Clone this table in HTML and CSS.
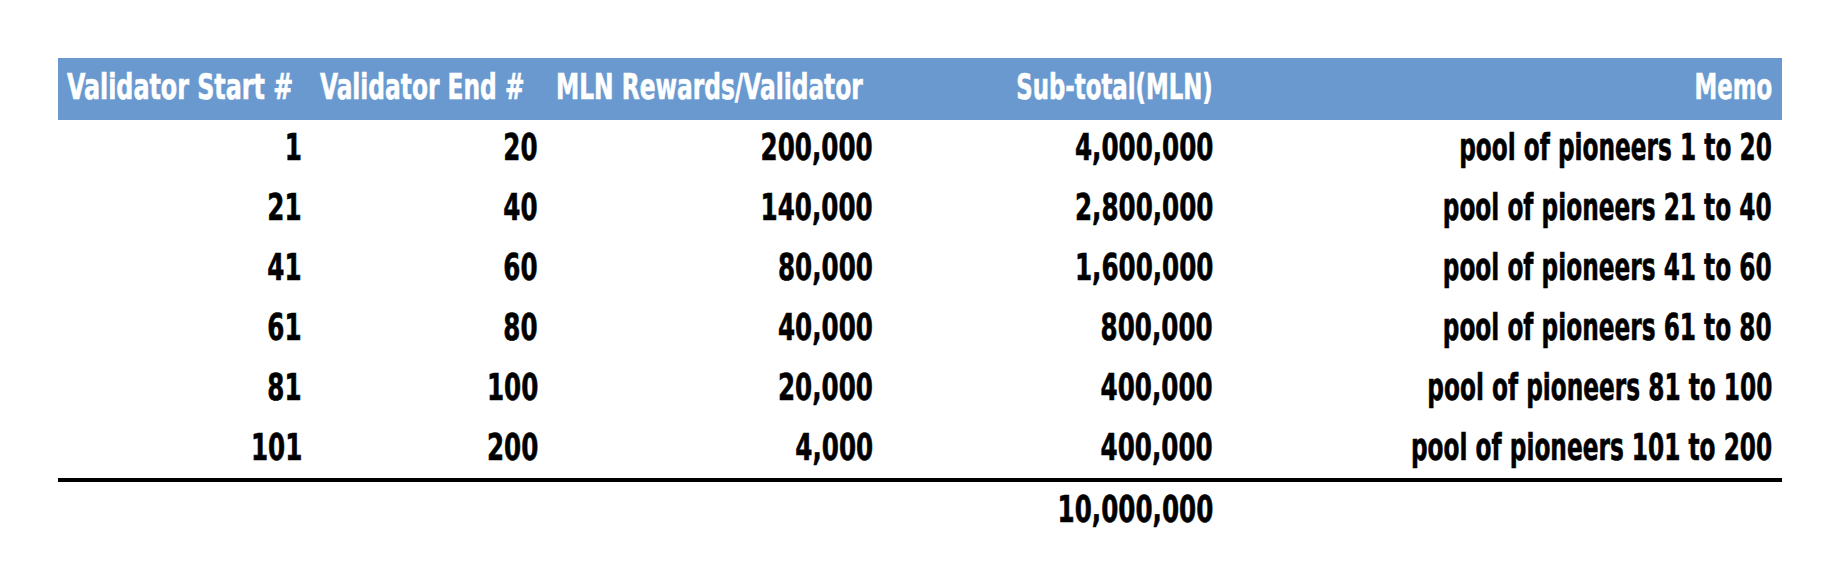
FILE: index.html
```html
<!DOCTYPE html>
<html>
<head>
<meta charset="utf-8">
<link rel="stylesheet" href="styles.css">
</head>
<body>
<table class="rewards">
  <colgroup>
    <col class="c1"><col class="c2"><col class="c3"><col class="c4"><col class="c5">
  </colgroup>
  <thead>
    <tr>
      <th class="left"><span class="t">Validator Start #</span></th>
      <th class="left"><span class="t">Validator End #</span></th>
      <th class="left"><span class="t">MLN Rewards/Validator</span></th>
      <th class="right"><span class="t">Sub-total(MLN)</span></th>
      <th class="right"><span class="t">Memo</span></th>
    </tr>
  </thead>
  <tbody>
    <tr><td><span class="t">1</span></td><td><span class="t">20</span></td><td><span class="t">200,000</span></td><td><span class="t">4,000,000</span></td><td><span class="t memo">pool of pioneers 1 to 20</span></td></tr>
    <tr><td><span class="t">21</span></td><td><span class="t">40</span></td><td><span class="t">140,000</span></td><td><span class="t">2,800,000</span></td><td><span class="t memo">pool of pioneers 21 to 40</span></td></tr>
    <tr><td><span class="t">41</span></td><td><span class="t">60</span></td><td><span class="t">80,000</span></td><td><span class="t">1,600,000</span></td><td><span class="t memo">pool of pioneers 41 to 60</span></td></tr>
    <tr><td><span class="t">61</span></td><td><span class="t">80</span></td><td><span class="t">40,000</span></td><td><span class="t">800,000</span></td><td><span class="t memo">pool of pioneers 61 to 80</span></td></tr>
    <tr><td><span class="t">81</span></td><td><span class="t">100</span></td><td><span class="t">20,000</span></td><td><span class="t">400,000</span></td><td><span class="t memo">pool of pioneers 81 to 100</span></td></tr>
    <tr class="last"><td><span class="t">101</span></td><td><span class="t">200</span></td><td><span class="t">4,000</span></td><td><span class="t">400,000</span></td><td><span class="t memo">pool of pioneers 101 to 200</span></td></tr>
  </tbody>
  <tfoot>
    <tr><td></td><td></td><td></td><td><span class="t">10,000,000</span></td><td></td></tr>
  </tfoot>
</table>
</body>
</html>
```
FILE: styles.css
```css
html, body {
  margin: 0;
  padding: 0;
  background: #ffffff;
}

.rewards {
  margin: 58px 0 0 58px;
  border-collapse: separate;
  border-spacing: 0;
  table-layout: fixed;
  width: 1724px;
  font-family: "DejaVu Sans Condensed", "DejaVu Sans", sans-serif;
  font-stretch: condensed;
  font-weight: bold;
  color: #000000;
}

.c1 { width: 253px; }
.c2 { width: 236px; }
.c3 { width: 335px; }
.c4 { width: 340px; }
.c5 { width: 560px; }

.rewards th {
  background: #6999cf;
  color: #ffffff;
  font-size: 36px;
  line-height: 57px;
  padding: 0 9px 5px 9px;
  white-space: nowrap;
  font-weight: bold;
}

.rewards th.left { text-align: left; }
.rewards th.right { text-align: right; }
.rewards th:last-child { padding-right: 10px; }

.rewards td {
  font-size: 38px;
  line-height: 54px;
  padding: 0 9px 6px 9px;
  text-align: right;
  white-space: nowrap;
}

.rewards td:last-child { padding-right: 10px; }

.t {
  display: inline-block;
  transform: scaleX(0.72);
  transform-origin: right center;
  -webkit-text-stroke: 0.6px currentColor;
}

th.left .t {
  transform: scaleX(0.72);
  transform-origin: left center;
}

th.left:nth-child(1) .t {
  transform: scaleX(0.735);
}

th.right .t {
  transform: scaleX(0.705);
}

.t.memo {
  transform: scaleX(0.68);
}

.rewards tr.last td {
  padding-bottom: 4px;
  border-bottom: 4px solid #000000;
}

.rewards tfoot td {
  padding-bottom: 0;
}
```
